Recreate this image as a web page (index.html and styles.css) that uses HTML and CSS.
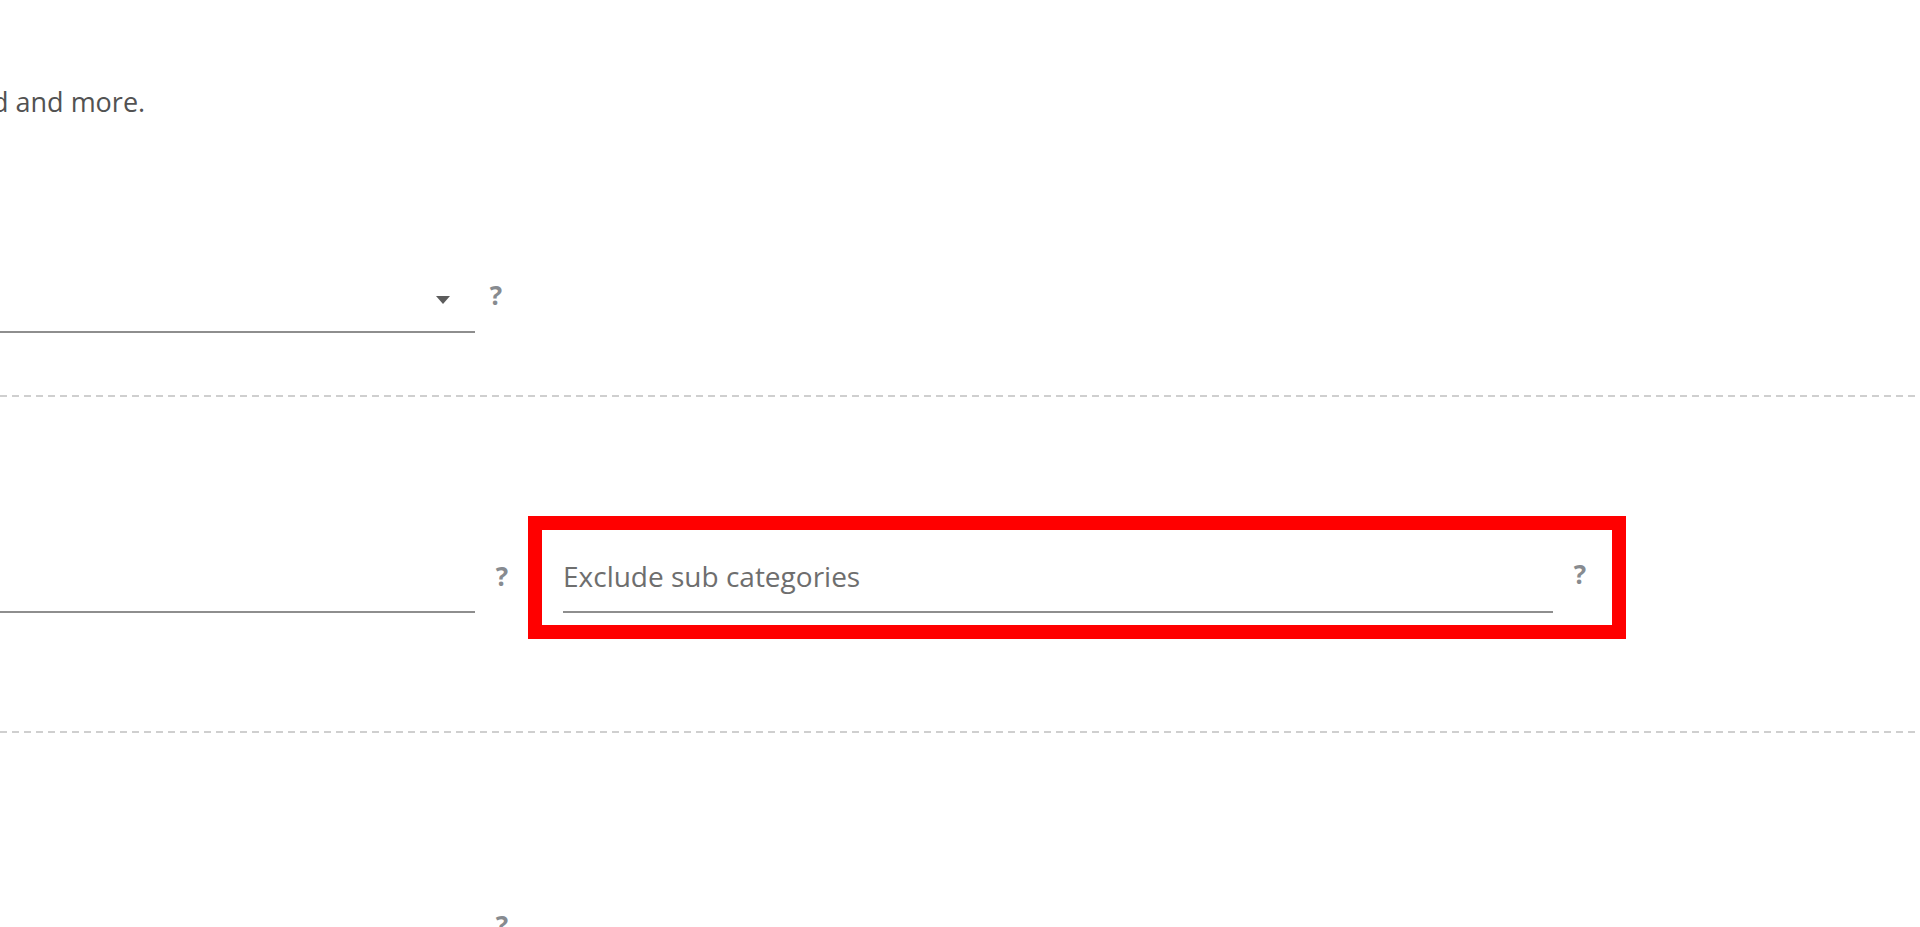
FILE: index.html
```html
<!DOCTYPE html>
<html lang="en">
<head>
<meta charset="utf-8">
<title>Category settings</title>
<link rel="stylesheet" href="styles.css">
</head>
<body>
<main class="settings">
  <p class="intro">d and more.</p>

  <section class="row row-select">
    <div class="field select"><span class="caret"></span></div>
    <span class="help">?</span>
  </section>

  <div class="divider"></div>

  <section class="row row-text">
    <div class="field text"></div>
    <span class="help">?</span>
    <div class="highlight">
      <div class="field text wide"><span class="placeholder">Exclude sub categories</span></div>
      <span class="help">?</span>
    </div>
  </section>

  <div class="divider"></div>

  <section class="row row-last">
    <div class="field text"></div>
    <span class="help">?</span>
  </section>
</main>
</body>
</html>
```

FILE: styles.css
```css
html, body {
  margin: 0;
  padding: 0;
  background: #ffffff;
  overflow: hidden;
}

body {
  font-family: "Open Sans", "Noto Sans", "Liberation Sans", sans-serif;
  color: #505050;
}

.settings {
  padding-top: 84px;
  height: 927px;
  box-sizing: border-box;
}

.intro {
  margin: 0;
  font-size: 27px;
  line-height: 36px;
  text-indent: -8px;
  color: #525252;
}

.row {
  display: flex;
  align-items: flex-start;
}

.row-select {
  margin-top: 163px;
}

.field {
  width: 475px;
  border-bottom: 2px solid #8e8e8e;
  box-sizing: border-box;
}

.select {
  height: 46px;
  margin-top: 4px;
  display: flex;
  justify-content: flex-end;
  align-items: flex-start;
  padding-right: 25px;
  padding-top: 9px;
}

.caret {
  width: 0;
  height: 0;
  border-left: 7px solid transparent;
  border-right: 7px solid transparent;
  border-top: 8px solid #5c5c5c;
}

.help {
  width: 16px;
  text-align: center;
  font-size: 26px;
  line-height: 24px;
  font-weight: 700;
  color: #878b90;
}

.row-select .help {
  margin-left: 13px;
}

.divider {
  height: 2px;
  background: repeating-linear-gradient(to right, #cfcfcf 0 7px, transparent 7px 12px);
}

.row-select + .divider {
  margin-top: 62px;
}

.row-text {
  margin-top: 119px;
}

.text {
  height: 63px;
  margin-top: 34px;
}

.row-text > .help,
.row-last > .help {
  margin-left: 19px;
  margin-top: 48px;
}

.highlight {
  display: flex;
  align-items: flex-start;
  margin-left: 18px;
  border: 14px solid #ff0000;
  padding: 20px 24px 12px 21px;
}

.highlight .text {
  margin-top: 0;
}

.wide {
  width: 990px;
}

.placeholder {
  display: block;
  padding-top: 8px;
  font-size: 28px;
  line-height: 36px;
  color: #6e6e6e;
}

.highlight .help {
  margin-left: 19px;
  margin-top: 12px;
}

.row-text + .divider {
  margin-top: 92px;
}

.row-last {
  margin-top: 132px;
}
```
